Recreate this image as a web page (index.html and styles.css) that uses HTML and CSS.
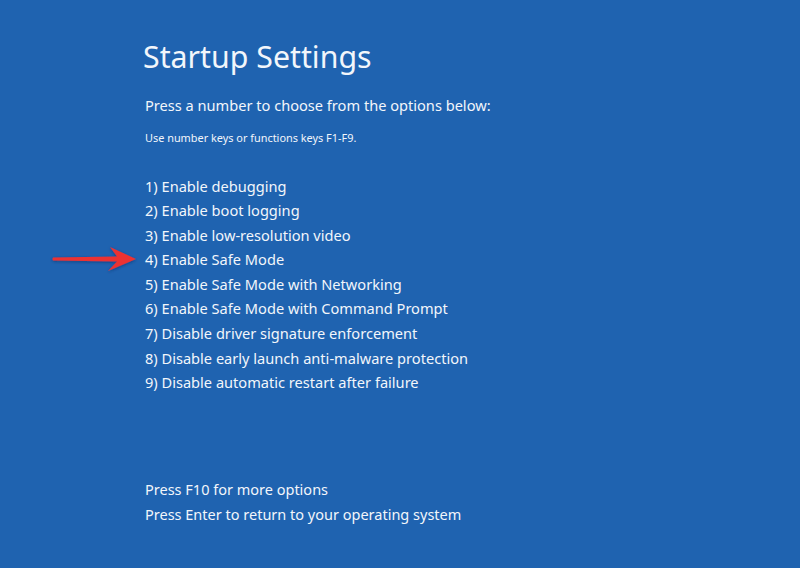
FILE: index.html
```html
<!DOCTYPE html>
<html lang="en">
<head>
<meta charset="utf-8">
<title>Startup Settings</title>
<link rel="stylesheet" href="styles.css">
</head>
<body>
<main class="screen">
  <h1 class="title">Startup Settings</h1>
  <p class="lead">Press a number to choose from the options below:</p>
  <p class="hint">Use number keys or functions keys F1-F9.</p>
  <ol class="options">
    <li>1) Enable debugging</li>
    <li>2) Enable boot logging</li>
    <li>3) Enable low-resolution video</li>
    <li class="marked">4) Enable Safe Mode
      <svg class="arrow" width="90" height="30" viewBox="0 0 90 30" aria-hidden="true">
        <defs>
          <filter id="sh" x="-20%" y="-50%" width="140%" height="200%">
            <feDropShadow dx="0" dy="1" stdDeviation="1.5" flood-color="#0a2a5a" flood-opacity="0.55"/>
          </filter>
        </defs>
        <path d="M3 13.5 L67 12.4 L60 3 L86 15 L58 27 L67 17.6 L3 16.5 Q1.8 15 3 13.5 Z" fill="#ec3330" filter="url(#sh)"/>
      </svg>
    </li>
    <li>5) Enable Safe Mode with Networking</li>
    <li>6) Enable Safe Mode with Command Prompt</li>
    <li>7) Disable driver signature enforcement</li>
    <li>8) Disable early launch anti-malware protection</li>
    <li>9) Disable automatic restart after failure</li>
  </ol>
  <div class="footer">
    <p>Press F10 for more options</p>
    <p>Press Enter to return to your operating system</p>
  </div>
</main>
</body>
</html>
```
FILE: styles.css
```css
html, body {
  margin: 0;
  padding: 0;
  height: 100%;
}
body {
  background: #1f63b0;
  color: #f2f6fb;
  font-family: "Noto Sans", "Open Sans", "Liberation Sans", sans-serif;
  overflow: hidden;
}
.screen {
  padding: 37px 0 0 145px;
  display: flex;
  flex-direction: column;
}
.title {
  margin: 0 0 0 -2px;
  font-size: 30.3px;
  font-weight: 400;
  line-height: 40px;
  letter-spacing: 0;
}
.lead {
  margin: 18px 0 0 0;
  font-size: 14.6px;
  line-height: 20px;
}
.hint {
  margin: 15px 0 0 0;
  font-size: 10.9px;
  line-height: 16px;
}
.options {
  list-style: none;
  margin: 27.5px 0 0 0;
  padding: 0;
}
.options li {
  font-size: 14.6px;
  line-height: 24.6px;
  height: 24.6px;
  white-space: nowrap;
}
.marked {
  position: relative;
}
.arrow {
  position: absolute;
  left: -95px;
  top: -3px;
}
.footer {
  margin-top: 82.5px;
}
.footer p {
  margin: 0;
  font-size: 14.5px;
  line-height: 24.6px;
}
```
